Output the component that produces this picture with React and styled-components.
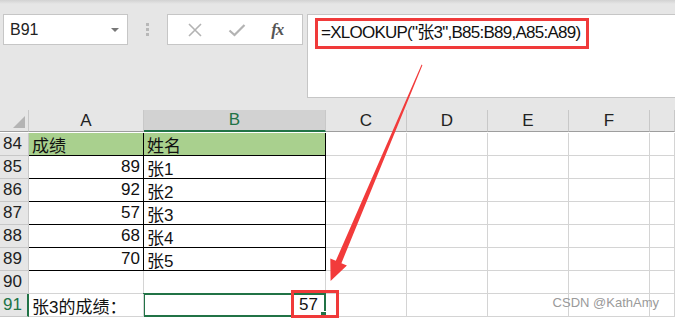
import React from 'react';
import styled, { createGlobalStyle } from 'styled-components';

const Global = createGlobalStyle`
  html, body { margin: 0; padding: 0; background: #fff; }
  body { font-family: "Noto Sans", "Noto Sans CJK SC", sans-serif; }
`;

const Page = styled.div`
  position: relative;
  width: 675px;
  height: 318px;
  overflow: hidden;
  background: #fff;
`;

const TopArea = styled.div`
  height: 110px;
  background: linear-gradient(#d2d2d2 0, #e6e6e6 4px, #e6e6e6 100%);
  display: flex;
  align-items: flex-start;
  padding: 14px 0 0 3px;
  box-sizing: border-box;
`;

const NameBox = styled.div`
  width: 125px;
  height: 31px;
  box-sizing: border-box;
  background: #fff;
  border: 1px solid #c6c6c6;
  display: flex;
  align-items: center;
  justify-content: space-between;
  padding: 0 8px 0 6px;
  font-family: "Liberation Sans", "Noto Sans", sans-serif;
  font-size: 16px;
  color: #222;
`;

const Caret = styled.span`
  width: 0;
  height: 0;
  border-left: 4px solid transparent;
  border-right: 4px solid transparent;
  border-top: 4px solid #777;
`;

const Dots = styled.div`
  width: 39px;
  height: 31px;
  display: flex;
  flex-direction: column;
  align-items: center;
  justify-content: center;
  gap: 2px;
  span {
    width: 3px;
    height: 3px;
    background: #b8b8b8;
  }
`;

const FuncBox = styled.div`
  width: 136px;
  height: 31px;
  box-sizing: border-box;
  background: #fff;
  border: 1px solid #c6c6c6;
  display: flex;
  align-items: center;
  justify-content: space-around;
  padding: 0 6px;
`;

const Fx = styled.span`
  font-family: "Liberation Serif", serif;
  font-style: italic;
  font-weight: bold;
  font-size: 17px;
  color: #555;
  letter-spacing: -1px;
`;

const FormulaBar = styled.div`
  flex: 1;
  margin-left: 4px;
  height: 84px;
  box-sizing: border-box;
  background: #fff;
  border: 1px solid #c6c6c6;
  border-right: none;
  padding: 3px 0 0 7px;
`;

const Highlight = styled.span`
  display: inline-block;
  border: 3px solid #f03a3a;
  padding: 1px 6px 2px 3px;
  font-family: "Liberation Sans", "Noto Sans CJK SC", sans-serif;
  font-size: 17px;
  letter-spacing: -0.75px;
  color: #111;
  line-height: 22px;
`;

const Grid = styled.div`
  display: grid;
  grid-template-columns: 29px 115px 182px 81px 81px 81px 81px 1fr;
  grid-auto-rows: 23px;
  font-family: "Liberation Sans", "Noto Sans CJK SC", sans-serif;
  font-size: 17px;
  color: #111;
`;

const ColHead = styled.div`
  height: 22px;
  box-sizing: border-box;
  background: ${p => (p.$active ? '#d2d2d2' : '#e6e6e6')};
  border-right: 1px solid #c8c8c8;
  border-bottom: ${p => (p.$active ? '2px solid #217346' : '1px solid #9e9e9e')};
  display: flex;
  align-items: center;
  justify-content: center;
  font-size: 17px;
  color: ${p => (p.$active ? '#217346' : '#222')};
`;

const Corner = styled(ColHead)`
  position: relative;
  &::after {
    content: '';
    position: absolute;
    right: 3px;
    bottom: 3px;
    border-left: 12px solid transparent;
    border-bottom: 12px solid #b4b4b4;
  }
`;

const RowHead = styled.div`
  box-sizing: border-box;
  background: #e6e6e6;
  border-bottom: 1px solid #c8c8c8;
  border-right: ${p => (p.$active ? '2px solid #217346' : '1px solid #c8c8c8')};
  display: flex;
  align-items: center;
  padding-left: 3px;
  font-size: 17px;
  color: ${p => (p.$active ? '#217346' : '#222')};
`;

const Cell = styled.div`
  box-sizing: border-box;
  position: relative;
  background: ${p => (p.$fill ? '#a9d08e' : '#fff')};
  border-right: 1px solid ${p => (p.$br ? '#000' : '#d4d4d4')};
  border-bottom: 1px solid ${p => (p.$bb ? '#000' : '#d4d4d4')};
  display: flex;
  align-items: center;
  justify-content: ${p => (p.$num ? 'flex-end' : 'flex-start')};
  padding: 0 3px;
  white-space: nowrap;
  overflow: visible;
  z-index: ${p => (p.$over ? 1 : 0)};
`;

const Selected = styled(Cell)`
  border: 2px solid #217346;
  margin: -1px 0 0 -1px;
  padding-right: 6px;
`;

const Handle = styled.span`
  position: absolute;
  right: -4px;
  bottom: -4px;
  width: 6px;
  height: 6px;
  background: #217346;
  border: 1px solid #fff;
`;

const RedBox = styled.div`
  position: absolute;
  left: 291px;
  top: 290px;
  width: 48px;
  height: 28px;
  box-sizing: border-box;
  border: 3px solid #f03a3a;
  pointer-events: none;
`;

const Arrow = styled.svg`
  position: absolute;
  left: 0;
  top: 0;
  pointer-events: none;
`;

const Watermark = styled.div`
  position: absolute;
  right: 16px;
  bottom: 8px;
  font-family: "Liberation Sans", sans-serif;
  font-size: 13px;
  color: #9a9a9a;
`;

const cols = ['A', 'B', 'C', 'D', 'E', 'F', ''];

const rows = [
  { n: 84, a: '成绩', b: '姓名', head: true },
  { n: 85, a: '89', b: '张1' },
  { n: 86, a: '92', b: '张2' },
  { n: 87, a: '57', b: '张3' },
  { n: 88, a: '68', b: '张4' },
  { n: 89, a: '70', b: '张5' },
];

const XIcon = () => (
  <svg width="16" height="16" viewBox="0 0 16 16">
    <path d="M2 2 L14 14 M14 2 L2 14" stroke="#b3b3b3" strokeWidth="1.6" fill="none" />
  </svg>
);

const CheckIcon = () => (
  <svg width="18" height="16" viewBox="0 0 18 16">
    <path d="M1.5 8.5 L6.5 13 L16.5 3" stroke="#b3b3b3" strokeWidth="2.2" fill="none" />
  </svg>
);

const Blanks = ({ count }) =>
  Array.from({ length: count }).map((_, i) => <Cell key={i} />);

export default function App() {
  return (
    <Page>
      <Global />
      <TopArea>
        <NameBox>
          B91
          <Caret />
        </NameBox>
        <Dots>
          <span />
          <span />
          <span />
        </Dots>
        <FuncBox>
          <XIcon />
          <CheckIcon />
          <Fx>fx</Fx>
        </FuncBox>
        <FormulaBar>
          <Highlight>=XLOOKUP("张3",B85:B89,A85:A89)</Highlight>
        </FormulaBar>
      </TopArea>

      <Grid>
        <Corner />
        {cols.map(c => (
          <ColHead key={c || 'g'} $active={c === 'B'}>{c}</ColHead>
        ))}

        {rows.map(r => (
          <React.Fragment key={r.n}>
            <RowHead>{r.n}</RowHead>
            <Cell $fill={r.head} $br $bb $num={!r.head}>{r.a}</Cell>
            <Cell $fill={r.head} $br $bb>{r.b}</Cell>
            <Blanks count={5} />
          </React.Fragment>
        ))}

        <RowHead>90</RowHead>
        <Blanks count={7} />

        <RowHead $active>91</RowHead>
        <Cell $over>张3的成绩：</Cell>
        <Selected $num>
          57
          <Handle />
        </Selected>
        <Blanks count={5} />
      </Grid>

      <RedBox />
      <Arrow width="675" height="318">
        <polygon
          points="421.6,64.6 422.4,65.2 341.4,263.2 346.9,265.5 330.6,281 330.3,258.5 335.8,260.8"
          fill="#f23b3b"
        />
      </Arrow>
      <Watermark>CSDN @KathAmy</Watermark>
    </Page>
  );
}
